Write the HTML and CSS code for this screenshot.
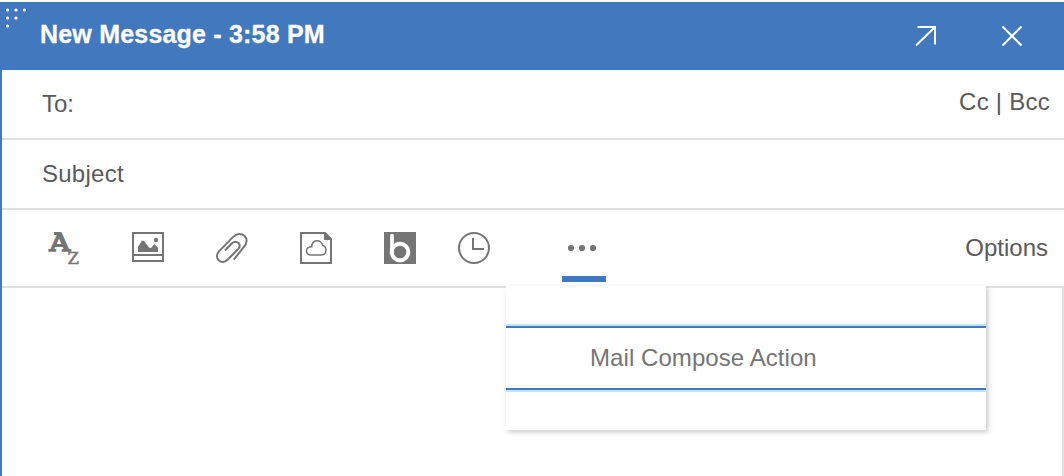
FILE: index.html
```html
<!DOCTYPE html>
<html lang="en">
<head>
<meta charset="utf-8">
<title>New Message</title>
<link rel="stylesheet" href="styles.css">
</head>
<body>
<div class="window">
  <header class="titlebar">
    <svg class="grip" width="24" height="24" viewBox="0 0 24 24"><g fill="#fff"><circle cx="3.500" cy="4" r="1.600"/><circle cx="12" cy="4" r="1.600"/><circle cx="20.500" cy="4" r="1.600"/><circle cx="3.500" cy="12" r="1.600"/><circle cx="12" cy="12" r="1.600"/><circle cx="3.500" cy="20" r="1.600"/></g></svg>
    <h1 class="title">New Message - 3:58 PM</h1>
    <div class="window-actions">
      <svg width="22" height="22" viewBox="0 0 22 22"><path d="M2.500 2H20V19.500M20 2L1 20.500" fill="none" stroke="#fff" stroke-width="2"/></svg>
      <svg width="22" height="22" viewBox="0 0 22 22"><path d="M1.500 1.500L20.500 20.500M20.500 1.500L1.500 20.500" fill="none" stroke="#fff" stroke-width="2"/></svg>
    </div>
  </header>
  <div class="body">
    <div class="field"><span>To:</span><span class="cc">Cc | Bcc</span></div>
    <div class="field"><span class="subject">Subject</span></div>
    <div class="toolbar">
      <div class="tools">
        <svg class="az" width="32" height="34" viewBox="0 0 32 34"><text class="az-a" x="1.500" y="18.500" textLength="20.500" lengthAdjust="spacingAndGlyphs">A</text><path d="M6 0H13V3H6Z" fill="#757575"/><text class="az-z" x="19.500" y="31.500" textLength="11.500" lengthAdjust="spacingAndGlyphs">Z</text></svg>
        <svg width="32" height="32" viewBox="0 0 32 32"><path d="M1 1H31V29H1ZM1 23H31" fill="none" stroke="#757575" stroke-width="2"/><path d="M6 20V15L10 8.500L12 9L17 15.500L19 16L22.500 12L26 16V20Z" fill="#757575"/><circle cx="24" cy="8" r="2.200" fill="#757575"/></svg>
        <svg width="32" height="32" viewBox="0 0 32 32"><path d="M9 18.500L15.500 11.700C18 9 20.700 9.200 22.500 11C24.200 12.800 23.800 15.300 22 17.200L11.500 27.800C8.800 30.500 5.200 30.600 2.700 28.200C.3 25.800.4 22 3.200 19.100L17.200 4.900C20.700 1.400 25.300 1 28.400 3.800C31.500 6.900 31.200 11.500 27.800 14.900L17.800 27.700" fill="none" stroke="#757575" stroke-width="2"/></svg>
        <svg width="32" height="32" viewBox="0 0 32 32"><path d="M25 1H1V31H31V7" fill="none" stroke="#757575" stroke-width="2"/><path d="M24 0H25.500L32 6.500V8H24Z" fill="#757575"/><path d="M10.500 23C4.500 22.500 5.500 14.500 11.700 14.700C12 7 21.800 7 22.500 13.500C27 13.500 27.500 23 21.500 23Z" fill="none" stroke="#757575" stroke-width="1.500"/></svg>
        <svg width="32" height="32" viewBox="0 0 32 32"><rect width="32" height="32" fill="#757575"/><circle cx="16" cy="20" r="8.300" fill="none" stroke="#fff" stroke-width="4"/><path d="M8 3.500V20" stroke="#fff" stroke-width="3.700" stroke-linecap="round"/></svg>
        <svg width="32" height="32" viewBox="0 0 32 32"><circle cx="16" cy="16" r="15" fill="none" stroke="#757575" stroke-width="2"/><path d="M15 6V17H26" fill="none" stroke="#757575" stroke-width="2"/></svg>
      </div>
      <div class="more">
        <svg width="44" height="8" viewBox="0 0 44 8"><g fill="#757575"><circle cx="9" cy="4" r="3.100"/><circle cx="20" cy="4" r="3.100"/><circle cx="31" cy="4" r="3.100"/></g></svg>
        <div class="menu"><div class="menu-item">Mail Compose Action</div></div>
      </div>
      <span class="options">Options</span>
    </div>
    <div class="editor"></div>
  </div>
</div>
</body>
</html>
```
FILE: styles.css
```css
* { box-sizing: border-box; }
body { margin: 0; background: #fff; font-family: "Liberation Sans", Arial, sans-serif; font-size: 24px; line-height: 28px; color: #5a5a5a; }
svg { display: block; flex: none; }
.window { height: 476px; padding-top: 2px; display: flex; flex-direction: column; overflow: hidden; }
.titlebar { position: relative; height: 68px; flex: none; background: #4178be; display: flex; justify-content: space-between; padding: 18px 41px 0 40px; color: #fff; }
.grip { position: absolute; left: 4px; top: 4px; }
.title { margin: 0; font-size: 25px; line-height: 28px; font-weight: 700; letter-spacing: .2px; -webkit-text-stroke: .3px #fff; }
.window-actions { display: flex; gap: 64px; padding-top: 5px; }
.body { flex: 1; display: flex; flex-direction: column; border-left: 2px solid #4178be; }
.field { height: 70px; flex: none; border-bottom: 2px solid #e0e0e0; display: flex; justify-content: space-between; padding: 20px 14px 0 40px; }
.cc { margin-top: -2px; letter-spacing: .25px; }
.subject { letter-spacing: .25px; }
.toolbar { height: 78px; flex: none; border-bottom: 2px solid #e0e0e0; display: flex; align-items: flex-start; padding: 0 16px 0 46px; }
.tools { display: flex; padding-top: 22px; gap: 52px; }
.tools svg:last-child { margin-left: -10px; }
.az { overflow: visible; }
.az-a { font: 25px "DejaVu Serif", serif; fill: #757575; stroke: #757575; stroke-width: 1.7px; }
.az-z { font: 17.5px "DejaVu Serif", serif; fill: #757575; stroke: #757575; stroke-width: .5px; }
.more { position: relative; width: 44px; height: 72px; margin-left: 72px; padding-top: 34px; border-bottom: 6px solid #4178be; }
.menu { position: absolute; left: -56px; top: 76px; width: 480px; height: 144px; padding-top: 38px; background: #fff; box-shadow: 2px 2px 5px rgba(0, 0, 0, .22); z-index: 1; }
.menu-item { height: 68px; border: solid #c0e6ff; border-width: 2px 0; box-shadow: inset 0 2px #4178be, inset 0 -2px #4178be; padding: 18px 0 0 84px; color: #757575; white-space: nowrap; letter-spacing: .07px; }
.options { margin: 24px 0 0 auto; }
.editor { flex: 1; border-right: 2px solid #e0e0e0; }
```
